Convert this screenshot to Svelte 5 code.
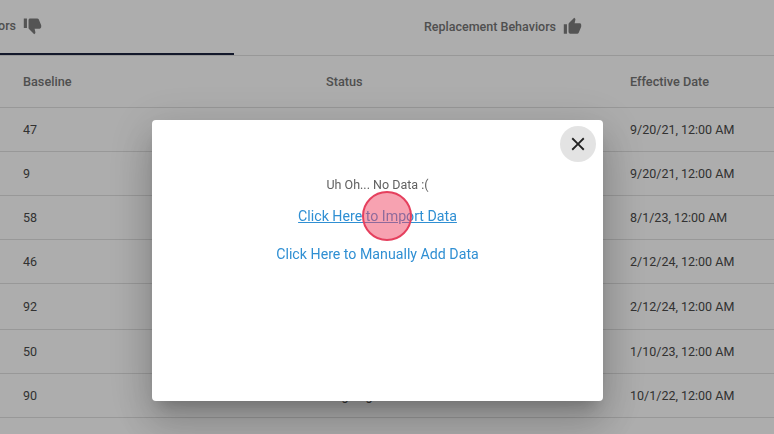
<script>
	const rows = [
		{ baseline: 47, status: 'Ongoing', date: '9/20/21, 12:00 AM', height: 44 },
		{ baseline: 9, status: 'Ongoing', date: '9/20/21, 12:00 AM', height: 44 },
		{ baseline: 58, status: 'Ongoing', date: '8/1/23, 12:00 AM', height: 44 },
		{ baseline: 46, status: 'Ongoing', date: '2/12/24, 12:00 AM', height: 44 },
		{ baseline: 92, status: 'Ongoing', date: '2/12/24, 12:00 AM', height: 46 },
		{ baseline: 50, status: 'Ongoing', date: '1/10/23, 12:00 AM', height: 44 },
		{ baseline: 90, status: 'Ongoing', date: '10/1/22, 12:00 AM', height: 44 }
	];
</script>

<div class="page">
	<div class="tabs">
		<div class="tab active">
			<span class="tab-label">Target Behaviors</span>
			<svg class="thumb" viewBox="0 0 24 24"><path d="M15 3H6c-.83 0-1.54.5-1.84 1.22l-3.02 7.05c-.09.23-.14.47-.14.73v2c0 1.1.9 2 2 2h6.31l-.95 4.57-.03.32c0 .41.17.79.44 1.06L9.83 23l6.59-6.59c.36-.36.58-.86.58-1.41V5c0-1.1-.9-2-2-2zm4 0v12h4V3h-4z" transform="matrix(-1 0 0 1 24 0)"/></svg>
		</div>
		<div class="tab">
			<span class="tab-label">Replacement Behaviors</span>
			<svg class="thumb" viewBox="0 0 24 24"><path d="M1 21h4V9H1v12zm22-11c0-1.1-.9-2-2-2h-6.31l.95-4.57.03-.32c0-.41-.17-.79-.44-1.06L14.17 1 7.59 7.59C7.22 7.95 7 8.45 7 9v10c0 1.1.9 2 2 2h9c.83 0 1.54-.5 1.84-1.22l3.02-7.05c.09-.23.14-.47.14-.73v-2z"/></svg>
		</div>
	</div>

	<div class="row head">
		<span>Baseline</span>
		<span>Status</span>
		<span>Effective Date</span>
	</div>
	{#each rows as r}
		<div class="row" style="height: {r.height}px">
			<span>{r.baseline}</span>
			<span>{r.status}</span>
			<span>{r.date}</span>
		</div>
	{/each}
</div>

<div class="backdrop">
	<div class="dialog">
		<button class="close" aria-label="Close">
			<svg viewBox="0 0 24 24" width="22" height="22"><path d="M19 6.41 17.59 5 12 10.59 6.41 5 5 6.41 10.59 12 5 17.59 6.41 19 12 13.41 17.59 19 19 17.59 13.41 12z"/></svg>
		</button>
		<p class="empty">Uh Oh... No Data :(</p>
		<a class="link first" href="#import">Click Here to Import Data</a>
		<a class="link second" href="#add">Click Here to Manually Add Data</a>
		<span class="click-marker"></span>
	</div>
</div>

<style>
	:global(body) {
		margin: 0;
		background: #fff;
		font-family: Roboto, "Liberation Sans", sans-serif;
		overflow: hidden;
	}

	.page {
		width: 774px;
		height: 434px;
		overflow: hidden;
		color: #212121;
		font-size: 12.5px;
	}

	.tabs {
		display: grid;
		grid-template-columns: 234px 1fr;
		height: 56px;
		box-sizing: border-box;
		border-bottom: 1px solid #e0e0e0;
	}

	.tab {
		display: flex;
		align-items: center;
		justify-content: center;
		gap: 7px;
		height: 55px;
		padding-bottom: 2px;
		box-sizing: border-box;
		font-weight: 500;
		color: #757575;
	}

	.tab:last-child {
		padding-right: 2px;
	}

	.tab.active {
		justify-content: flex-end;
		padding-right: 192px;
		border-bottom: 2px solid #1d2440;
		white-space: nowrap;
	}

	.thumb {
		width: 19px;
		height: 19px;
		fill: #7d7d7d;
		flex: none;
	}

	.row {
		display: grid;
		grid-template-columns: 303px 304px 1fr;
		align-items: center;
		padding-left: 23px;
		box-sizing: border-box;
		height: 44px;
		border-bottom: 1px solid #e0e0e0;
		color: #4a4a4a;
	}

	.row.head {
		height: 52px;
		font-size: 12.7px;
		font-weight: 500;
		color: #757575;
	}

	.backdrop {
		position: fixed;
		inset: 0;
		display: flex;
		align-items: flex-start;
		justify-content: center;
		padding-right: 19px;
		background: rgba(0, 0, 0, 0.32);
	}

	.dialog {
		position: relative;
		display: flex;
		flex-direction: column;
		align-items: center;
		flex: none;
		width: 451px;
		height: 281px;
		margin-top: 120px;
		box-sizing: border-box;
		padding-top: 57px;
		background: #fff;
		border-radius: 4px;
		box-shadow: 0 11px 15px -7px rgba(0, 0, 0, 0.2), 0 24px 38px 3px rgba(0, 0, 0, 0.14), 0 9px 46px 8px rgba(0, 0, 0, 0.12);
	}

	.close {
		position: absolute;
		top: 6px;
		right: 7px;
		display: flex;
		align-items: center;
		justify-content: center;
		width: 36px;
		height: 36px;
		padding: 0;
		border: 0;
		border-radius: 50%;
		background: #e3e3e3;
		color: #212121;
	}

	.close svg {
		fill: currentColor;
	}

	.empty {
		margin: 0;
		font-size: 12.5px;
		line-height: 16px;
		color: #616161;
	}

	.link {
		font-size: 14.2px;
		line-height: 18px;
		color: #2f8fd3;
		text-decoration: none;
	}

	.link.first {
		margin-top: 14px;
		text-decoration: underline;
	}

	.link.second {
		margin-top: 20px;
	}

	.click-marker {
		position: absolute;
		left: 210px;
		top: 71px;
		width: 50px;
		height: 50px;
		box-sizing: border-box;
		border: 2px solid #e5405e;
		border-radius: 50%;
		background: rgba(240, 70, 100, 0.5);
	}
</style>
